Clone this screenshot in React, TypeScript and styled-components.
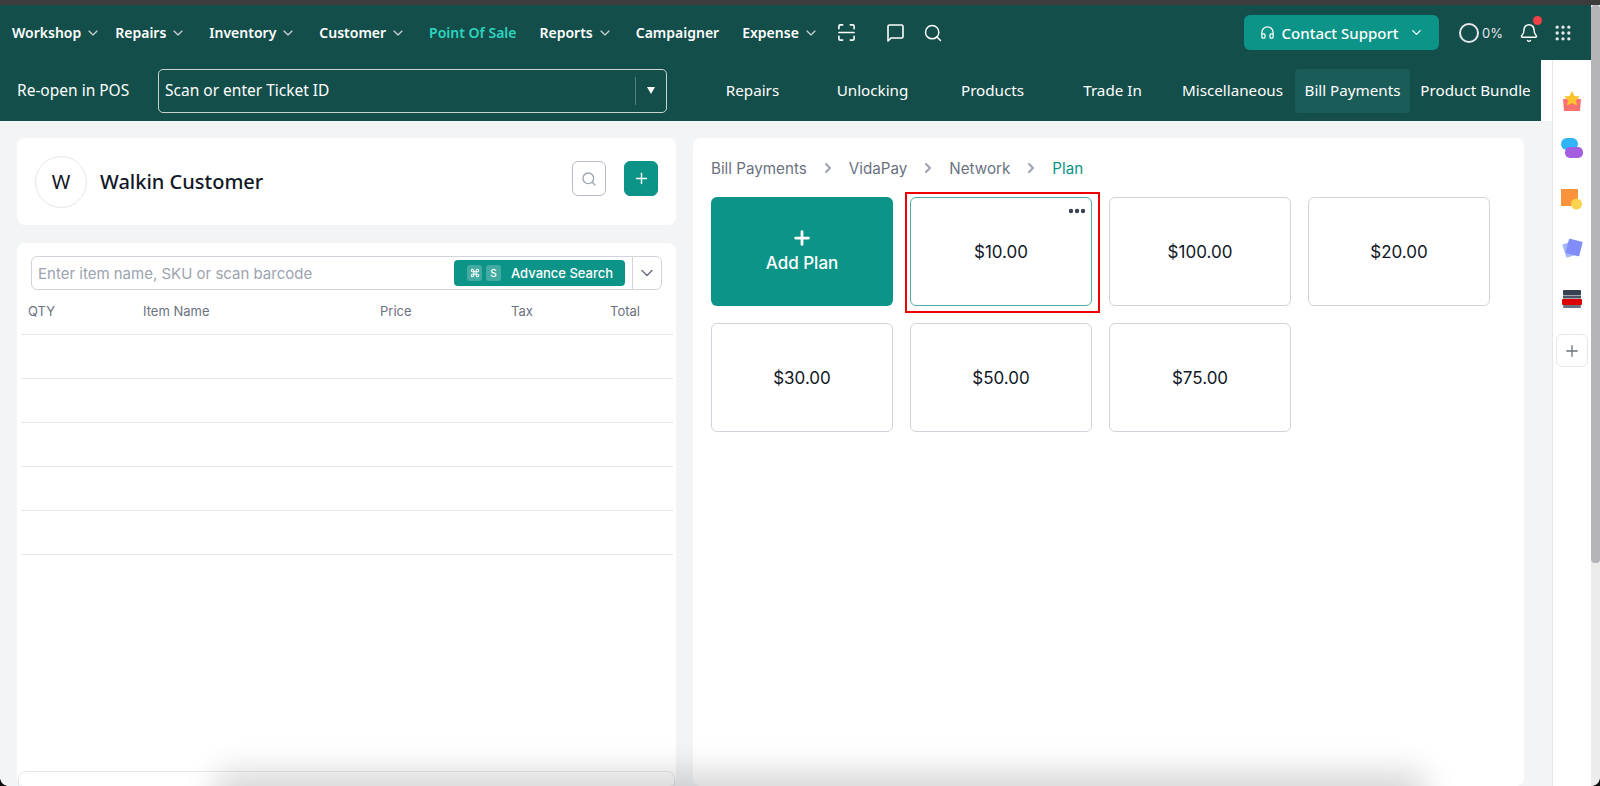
import React from "react";
import styled, { createGlobalStyle } from "styled-components";
import { Bell, ChevronDown, ChevronRight, Command, Grip, Headphones, Plus, Search } from "lucide-react";

const GlobalStyle = createGlobalStyle`
  html, body {
    margin: 0;
    padding: 0;
    height: 100%;
    overflow: hidden;
    background: #f3f4f6;
    font-family: "Inter", "Liberation Sans", sans-serif;
  }
  * { box-sizing: border-box; }
`;

const Page = styled.div`
  position: relative;
  height: 100vh;
  display: flex;
  flex-direction: column;
  overflow: hidden;
`;

const TopStrip = styled.div`
  height: 5px;
  flex: none;
  background: #3c3c3c;
`;

const Frame = styled.div`
  flex: 1;
  min-height: 0;
  display: flex;
`;

const Content = styled.div`
  flex: 1;
  min-width: 0;
  display: flex;
  flex-direction: column;
`;

const Scrollbar = styled.div`
  width: 9px;
  flex: none;
  background: #ececec;
`;

const ScrollThumb = styled.div`
  height: 558px;
  background: #b4b4b8;
  border-radius: 4px;
`;

const NavBar = styled.nav`
  height: 55px;
  flex: none;
  display: flex;
  align-items: center;
  gap: 23px;
  padding: 0 18px 0 12px;
  background: #134e4a;
  color: #fff;
  font-family: "Noto Sans", sans-serif;
  font-size: 14px;
  font-weight: 600;
`;

const NavItem = styled.div<{ $tight?: boolean; $active?: boolean }>`
  display: flex;
  align-items: center;
  gap: 4px;
  margin-right: ${(p) => (p.$tight ? "-9px" : "0")};
  color: ${(p) => (p.$active ? "#2dd4bf" : "#fff")};
  white-space: nowrap;
`;

const NavIcons = styled.div`
  display: flex;
  align-items: center;
  gap: 29px;
  margin-left: -5px;
`;

const NavRight = styled.div`
  margin-left: auto;
  display: flex;
  align-items: center;
`;

const SupportButton = styled.div`
  width: 195px;
  height: 35px;
  display: flex;
  align-items: center;
  justify-content: center;
  gap: 7px;
  background: #0d9488;
  border-radius: 6px;
  font-size: 15px;
  font-weight: 500;
`;

const Progress = styled.div`
  display: flex;
  align-items: center;
  gap: 3px;
  margin-left: 20px;
  font-family: "Inter", sans-serif;
  font-size: 13px;
  font-weight: 400;
  color: #e5e7eb;
`;

const Ring = styled.span`
  width: 20px;
  height: 20px;
  border: 2px solid #e5e7eb;
  border-radius: 50%;
`;

const BellWrap = styled.div`
  position: relative;
  display: flex;
  margin-left: 16px;
  margin-right: 14px;
`;

const BellDot = styled.span`
  position: absolute;
  top: -7px;
  right: -3px;
  width: 9px;
  height: 9px;
  border-radius: 50%;
  background: #f43f46;
`;

const SubRow = styled.div`
  flex: none;
  background: #fff;
`;

const SubBar = styled.div`
  width: 1541px;
  height: 61px;
  display: flex;
  align-items: center;
  padding-left: 17px;
  background: #134e4a;
  color: #fff;
  font-family: "Noto Sans", sans-serif;
  font-size: 15.5px;
`;

const SubLabel = styled.span`
  width: 141px;
  padding-bottom: 2px;
  white-space: nowrap;
`;

const TicketField = styled.div`
  width: 509px;
  height: 44px;
  display: flex;
  align-items: center;
  padding-left: 6px;
  border: 1px solid #c9d3d1;
  border-radius: 5px;
`;

const TicketText = styled.span`
  flex: 1;
  padding-bottom: 2px;
`;

const TicketCaret = styled.span`
  width: 31px;
  height: 28px;
  display: flex;
  align-items: center;
  justify-content: center;
  border-left: 1px solid #5a7f7c;

  &::before {
    content: "";
    border-left: 4px solid transparent;
    border-right: 4px solid transparent;
    border-top: 7px solid #fff;
  }
`;

const Tabs = styled.div`
  display: flex;
  gap: 5px;
  margin-left: 28px;
  font-size: 15.2px;
`;

const Tab = styled.div<{ $active?: boolean }>`
  width: 115px;
  height: 44px;
  display: flex;
  align-items: center;
  justify-content: center;
  padding-bottom: 2px;
  border-radius: 4px;
  background: ${(p) => (p.$active ? "#1a5c58" : "transparent")};
  white-space: nowrap;

  &:last-child {
    margin-left: 3px;
  }
`;

const Below = styled.div`
  flex: 1;
  min-height: 0;
  display: grid;
  grid-template-columns: 659px 831px;
  grid-template-rows: 87px 1fr;
  column-gap: 17px;
  row-gap: 18px;
  padding: 17px 28px 0 17px;
  width: 1552px;
  background: #f3f4f6;
`;

const Card = styled.section`
  background: #fff;
  border-radius: 8px;
`;

const CustomerCard = styled(Card)`
  display: flex;
  align-items: center;
  padding: 0 18px 0 18px;
`;

const Avatar = styled.div`
  width: 52px;
  height: 52px;
  display: flex;
  align-items: center;
  justify-content: center;
  border: 1px solid #e5e7eb;
  border-radius: 50%;
  font-family: "Noto Sans", sans-serif;
  font-size: 20px;
  color: #111827;
`;

const CustomerName = styled.h2`
  flex: 1;
  margin: 0 0 0 13px;
  font-family: "Noto Sans", sans-serif;
  font-size: 20px;
  font-weight: 500;
  color: #111827;
`;

const SquareButton = styled.div<{ $primary?: boolean }>`
  width: 34px;
  height: 35px;
  margin-left: ${(p) => (p.$primary ? "18px" : "0")};
  margin-bottom: 6px;
  display: flex;
  align-items: center;
  justify-content: center;
  border-radius: 6px;
  border: 1px solid ${(p) => (p.$primary ? "#0d9488" : "#b6bcc5")};
  background: ${(p) => (p.$primary ? "#0d9488" : "#fff")};
  color: ${(p) => (p.$primary ? "#fff" : "#9ca3af")};
`;

const CartCard = styled(Card)`
  grid-column: 1;
  grid-row: 2;
  position: relative;
  display: flex;
  flex-direction: column;
  padding-top: 13px;
  min-height: 0;
`;

const ItemSearch = styled.div`
  width: 631px;
  height: 34px;
  margin-left: 14px;
  flex: none;
  display: flex;
  align-items: center;
  padding-left: 6px;
  border: 1px solid #d1d5db;
  border-radius: 6px;
`;

const ItemPlaceholder = styled.span`
  flex: 1;
  font-size: 15px;
  color: #9ca3af;
  white-space: nowrap;
`;

const AdvanceButton = styled.div`
  width: 171px;
  height: 26px;
  display: flex;
  align-items: center;
  gap: 4px;
  padding-left: 13px;
  background: #0d9488;
  border-radius: 4px;
  color: #fff;
  font-size: 13px;
  font-weight: 500;
`;

const KeyCap = styled.span`
  width: 15px;
  height: 16px;
  display: flex;
  align-items: center;
  justify-content: center;
  background: rgba(255, 255, 255, 0.22);
  border-radius: 3px;
  font-size: 10px;
`;

const AdvanceLabel = styled.span`
  margin-left: 6px;
  white-space: nowrap;
`;

const SearchMenu = styled.div`
  width: 29px;
  height: 32px;
  margin-left: 7px;
  display: flex;
  align-items: center;
  justify-content: center;
  border-left: 1px solid #d1d5db;
  color: #6b7280;
`;

const TableHead = styled.div`
  height: 45px;
  flex: none;
  margin: 0 3px 0 4px;
  display: grid;
  grid-template-columns: 115px 237px 131px 99px auto;
  align-items: center;
  padding: 0 0 3px 7px;
  border-bottom: 1px solid #e5e7eb;
  font-size: 13px;
  color: #6b7280;
`;

const TableRow = styled.div`
  height: 44px;
  flex: none;
  margin: 0 3px 0 4px;
  border-bottom: 1px solid #e5e7eb;
`;

const CartFooter = styled.div`
  position: absolute;
  left: 1px;
  right: 1px;
  top: 528px;
  height: 40px;
  border: 1px solid #e5e7eb;
  border-radius: 8px 8px 0 0;
`;

const PlansCard = styled(Card)`
  grid-column: 2;
  grid-row: 1 / span 2;
  padding: 0 18px;
`;

const Breadcrumbs = styled.div`
  height: 59px;
  display: flex;
  align-items: center;
  padding-top: 1px;
  font-size: 15.2px;
  color: #6b7280;
`;

const Crumb = styled.span<{ $current?: boolean }>`
  color: ${(p) => (p.$current ? "#0d9488" : "#6b7280")};
`;

const CrumbArrow = styled.span`
  width: 42px;
  display: flex;
  justify-content: center;
  color: #9ca3af;
`;

const PlanGrid = styled.div`
  display: grid;
  grid-template-columns: repeat(4, 182px);
  grid-auto-rows: 109px;
  gap: 17px;
`;

const AddPlan = styled.div`
  display: flex;
  flex-direction: column;
  align-items: center;
  justify-content: center;
  gap: 4px;
  padding-bottom: 4px;
  background: #0d9488;
  border-radius: 6px;
  color: #fff;
  font-size: 17px;
  font-weight: 500;
`;

const PlanTile = styled.div<{ $selected?: boolean }>`
  position: relative;
  display: flex;
  align-items: center;
  justify-content: center;
  border: 1px solid ${(p) => (p.$selected ? "#4fae9f" : "#d1d5db")};
  border-radius: 6px;
  font-size: 17px;
  color: #111827;
`;

const TileMenu = styled.svg`
  position: absolute;
  top: 10px;
  right: 5px;
`;

const RedMark = styled.div`
  position: absolute;
  top: -6px;
  left: -6px;
  right: -9px;
  bottom: -8px;
  border: 2px solid #f00000;
`;

const SideRail = styled.aside`
  width: 39px;
  flex: none;
  display: flex;
  flex-direction: column;
  align-items: center;
  background: #fff;
  border-left: 1px solid #e5e7eb;
`;

const RailIcon = styled.svg<{ $top: number }>`
  display: block;
  flex: none;
  margin-top: ${(p) => p.$top}px;
`;

const RailAdd = styled.div`
  width: 32px;
  height: 33px;
  margin-top: 26px;
  display: flex;
  align-items: center;
  justify-content: center;
  border: 1px solid #e5e7eb;
  border-radius: 6px;
  color: #6b7280;
`;

const Main = styled.div`
  flex: 1;
  min-height: 0;
  display: flex;
`;

const Left = styled.div`
  width: 1552px;
  flex: none;
  display: flex;
  flex-direction: column;
`;

const WindowShadow = styled.div`
  position: absolute;
  left: 230px;
  right: 190px;
  bottom: -24px;
  height: 24px;
  box-shadow: 0 0 32px 14px rgba(0, 0, 0, 0.16);
  pointer-events: none;
`;

const Corner = styled.div<{ $right?: boolean }>`
  position: absolute;
  bottom: 0;
  ${(p) => (p.$right ? "right: 0;" : "left: 0;")}
  width: 8px;
  height: 8px;
  background: radial-gradient(
    circle at ${(p) => (p.$right ? "0 0" : "100% 0")},
    transparent 7.5px,
    #111 8px
  );
`;

const menus = [
  { label: "Workshop", chevron: true, tight: true },
  { label: "Repairs", chevron: true },
  { label: "Inventory", chevron: true },
  { label: "Customer", chevron: true },
  { label: "Point Of Sale", active: true },
  { label: "Reports", chevron: true },
  { label: "Campaigner" },
  { label: "Expense", chevron: true },
];

const tabs = ["Repairs", "Unlocking", "Products", "Trade In", "Miscellaneous", "Bill Payments", "Product Bundle"];
const crumbs = ["Bill Payments", "VidaPay", "Network"];
const plans = ["$10.00", "$100.00", "$20.00", "$30.00", "$50.00", "$75.00"];

const ScanIcon = () => (
  <svg width="19" height="19" viewBox="0 0 20 20" fill="none" stroke="#fff" strokeWidth="1.7" strokeLinecap="round">
    <path d="M2 6V3.5A1.5 1.5 0 0 1 3.5 2H6M14 2h2.5A1.5 1.5 0 0 1 18 3.5V6M18 14v2.5a1.5 1.5 0 0 1-1.5 1.5H14M6 18H3.5A1.5 1.5 0 0 1 2 16.5V14M2 10h16" />
  </svg>
);

const ChatIcon = () => (
  <svg width="20" height="20" viewBox="0 0 20 20" fill="none" stroke="#fff" strokeWidth="1.6" strokeLinejoin="round">
    <path d="M3 3.5A1.5 1.5 0 0 1 4.5 2h12A1.5 1.5 0 0 1 18 3.5v10a1.5 1.5 0 0 1-1.5 1.5H6l-3 3z" />
  </svg>
);

export default function App() {
  return (
    <Page>
      <GlobalStyle />
      <TopStrip />
      <Frame>
        <Content>
          <NavBar>
            {menus.map((m) => (
              <NavItem key={m.label} $tight={m.tight} $active={m.active}>
                {m.label}
                {m.chevron && <ChevronDown size={16} strokeWidth={1.75} color="#d1d5db" />}
              </NavItem>
            ))}
            <NavIcons>
              <ScanIcon />
              <ChatIcon />
              <Search size={20} strokeWidth={1.75} style={{ marginLeft: -11 }} />
            </NavIcons>
            <NavRight>
              <SupportButton>
                <Headphones size={15} strokeWidth={2} />
                Contact Support
                <ChevronDown size={15} strokeWidth={2} style={{ marginLeft: 3 }} />
              </SupportButton>
              <Progress>
                <Ring />
                0%
              </Progress>
              <BellWrap>
                <Bell size={20} strokeWidth={1.75} />
                <BellDot />
              </BellWrap>
              <Grip size={20} strokeWidth={2} color="#e5e7eb" />
            </NavRight>
          </NavBar>
          <Main>
            <Left>
              <SubRow>
                <SubBar>
                  <SubLabel>Re-open in POS</SubLabel>
                  <TicketField>
                    <TicketText>Scan or enter Ticket ID</TicketText>
                    <TicketCaret />
                  </TicketField>
                  <Tabs>
                    {tabs.map((t) => (
                      <Tab key={t} $active={t === "Bill Payments"}>
                        {t}
                      </Tab>
                    ))}
                  </Tabs>
                </SubBar>
              </SubRow>
              <Below>
                <CustomerCard>
                  <Avatar>W</Avatar>
                  <CustomerName>Walkin Customer</CustomerName>
                  <SquareButton>
                    <Search size={16} strokeWidth={2} />
                  </SquareButton>
                  <SquareButton $primary>
                    <Plus size={17} strokeWidth={2} />
                  </SquareButton>
                </CustomerCard>
                <CartCard>
                  <ItemSearch>
                    <ItemPlaceholder>Enter item name, SKU or scan barcode</ItemPlaceholder>
                    <AdvanceButton>
                      <KeyCap>
                        <Command size={10} strokeWidth={2.5} />
                      </KeyCap>
                      <KeyCap>S</KeyCap>
                      <AdvanceLabel>Advance Search</AdvanceLabel>
                    </AdvanceButton>
                    <SearchMenu>
                      <ChevronDown size={20} strokeWidth={1.75} />
                    </SearchMenu>
                  </ItemSearch>
                  <TableHead>
                    <span>QTY</span>
                    <span>Item Name</span>
                    <span>Price</span>
                    <span>Tax</span>
                    <span>Total</span>
                  </TableHead>
                  {[0, 1, 2, 3, 4].map((r) => (
                    <TableRow key={r} />
                  ))}
                  <CartFooter />
                </CartCard>
                <PlansCard>
                  <Breadcrumbs>
                    {crumbs.map((c) => (
                      <React.Fragment key={c}>
                        <Crumb>{c}</Crumb>
                        <CrumbArrow>
                          <ChevronRight size={16} strokeWidth={3} />
                        </CrumbArrow>
                      </React.Fragment>
                    ))}
                    <Crumb $current>Plan</Crumb>
                  </Breadcrumbs>
                  <PlanGrid>
                    <AddPlan>
                      <Plus size={22} strokeWidth={3} />
                      Add Plan
                    </AddPlan>
                    {plans.map((p, i) => (
                      <PlanTile key={p} $selected={i === 0}>
                        {p}
                        {i === 0 && (
                          <>
                            <TileMenu width="18" height="6" viewBox="0 0 18 6" fill="#374151">
                              <circle cx="3" cy="3" r="2.2" />
                              <circle cx="9" cy="3" r="2.2" />
                              <circle cx="15" cy="3" r="2.2" />
                            </TileMenu>
                            <RedMark />
                          </>
                        )}
                      </PlanTile>
                    ))}
                  </PlanGrid>
                </PlansCard>
              </Below>
            </Left>
            <SideRail>
              <RailIcon $top={30} width="20" height="22" viewBox="0 0 20 22">
                <path d="M1 9h5l4 3 4-3h5l-1 12H2z" fill="#fb7070" />
                <path d="M10 1l2.5 5 5.5.6-4 3.7 1 5.4-5-2.7-5 2.7 1-5.4-4-3.7 5.5-.6z" fill="#fcc32c" />
              </RailIcon>
              <RailIcon $top={26} width="22" height="21" viewBox="0 0 22 21">
                <rect x="0" y="0" width="17" height="12" rx="6" fill="#2fb4f7" />
                <rect x="4" y="9" width="18" height="11" rx="5" fill="#a25de0" />
              </RailIcon>
              <RailIcon $top={30} width="22" height="21" viewBox="0 0 22 21">
                <rect x="0" y="0" width="17" height="17" fill="#fb923c" />
                <circle cx="15.5" cy="15" r="5.5" fill="#fcd34d" />
              </RailIcon>
              <RailIcon $top={28} width="22" height="22" viewBox="0 0 22 22">
                <rect x="3" y="4" width="14" height="14" rx="1" transform="rotate(-18 10 11)" fill="#a5b4fc" />
                <rect x="6" y="2" width="14" height="15" rx="1" transform="rotate(14 13 10)" fill="#818cf8" />
              </RailIcon>
              <RailIcon $top={30} width="20" height="18" viewBox="0 0 20 18">
                <rect x="1" y="0" width="18" height="5" rx="1" fill="#374151" />
                <rect x="1" y="5.5" width="18" height="3" fill="#4b5563" />
                <rect x="0" y="9" width="20" height="6" rx="1" fill="#dc0000" />
                <rect x="1" y="15" width="18" height="3" rx="1" fill="#6b7280" />
              </RailIcon>
              <RailAdd>
                <Plus size={18} strokeWidth={1.75} />
              </RailAdd>
            </SideRail>
          </Main>
        </Content>
        <Scrollbar>
          <ScrollThumb />
        </Scrollbar>
      </Frame>
      <WindowShadow />
      <Corner />
      <Corner $right />
    </Page>
  );
}
